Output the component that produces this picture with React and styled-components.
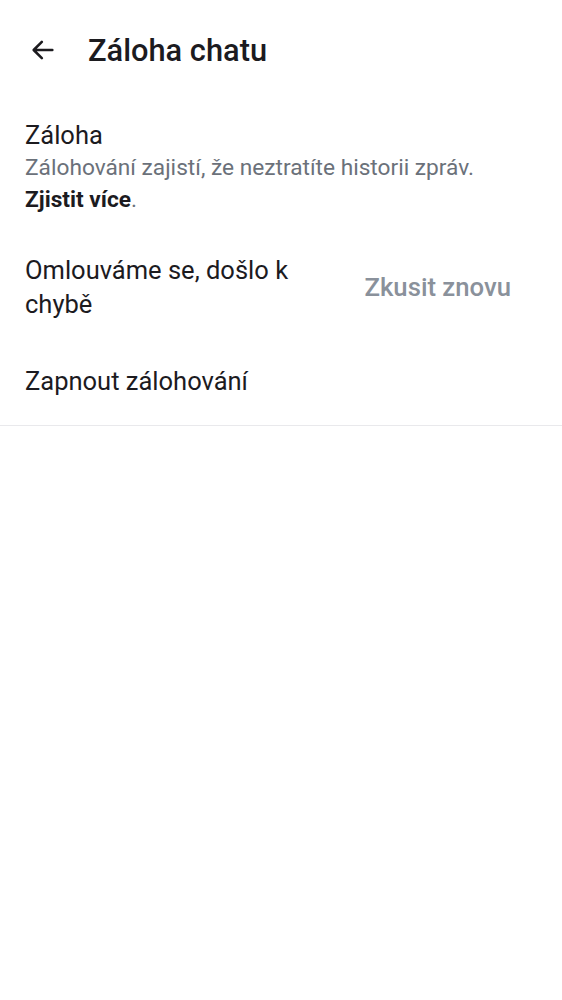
import React from 'react';
import styled, { createGlobalStyle } from 'styled-components';

const GlobalStyle = createGlobalStyle`
  html, body {
    margin: 0;
    padding: 0;
    background: #ffffff;
  }
  body {
    font-family: Roboto, "Noto Sans", sans-serif;
    color: #1c1b1f;
    -webkit-font-smoothing: antialiased;
  }
`;

const Screen = styled.div`
  width: 562px;
  min-height: 1000px;
  background: #fff;
`;

const Toolbar = styled.header`
  display: flex;
  align-items: center;
  height: 100px;
  padding-left: 28px;
  box-sizing: border-box;
`;

const BackButton = styled.button`
  display: flex;
  align-items: center;
  justify-content: center;
  width: 30px;
  height: 30px;
  padding: 0;
  margin-right: 30px;
  border: none;
  background: none;
  color: #1c1b1f;
`;

const Title = styled.h1`
  margin: 0;
  font-size: 30.8px;
  font-weight: 500;
  color: #1c1b1f;
`;

const List = styled.div`
  display: flex;
  flex-direction: column;
  border-bottom: 1px solid #e9e9ec;
`;

const Row = styled.div`
  display: flex;
  align-items: center;
  justify-content: space-between;
  padding: ${p => p.$pad || '0 25px'};
`;

const RowText = styled.div`
  display: flex;
  flex-direction: column;
  max-width: ${p => p.$max || 'none'};
`;

const Label = styled.div`
  font-size: 25.5px;
  line-height: 34px;
  color: #1c1b1f;
`;

const Hint = styled.div`
  font-size: 22.7px;
  line-height: 32px;
  color: #6b717a;
`;

const More = styled.span`
  font-weight: 700;
  color: #1c1b1f;
`;

const Action = styled.span`
  font-size: 25.7px;
  font-weight: 500;
  color: #8a919b;
  margin-right: 51px;
`;

const ArrowIcon = () => (
  <svg width="28" height="28" viewBox="0 0 24 24" fill="none">
    <path d="M20 12H4.5M11 5l-7 7 7 7" stroke="currentColor" strokeWidth="2.2" strokeLinecap="round" strokeLinejoin="round" />
  </svg>
);

export default function App() {
  return (
    <Screen>
      <GlobalStyle />
      <Toolbar>
        <BackButton aria-label="Zpět"><ArrowIcon /></BackButton>
        <Title>Záloha chatu</Title>
      </Toolbar>
      <List>
        <Row $pad="18px 25px 18px">
          <RowText>
            <Label>Záloha</Label>
            <Hint>Zálohování zajistí, že neztratíte historii zpráv.</Hint>
            <Hint><More>Zjistit více</More>.</Hint>
          </RowText>
        </Row>
        <Row $pad="19px 0 19px 25px">
          <RowText $max="310px">
            <Label>Omlouváme se, došlo k chybě</Label>
          </RowText>
          <Action>Zkusit znovu</Action>
        </Row>
        <Row $pad="24px 25px 27px">
          <RowText>
            <Label>Zapnout zálohování</Label>
          </RowText>
        </Row>
      </List>
    </Screen>
  );
}
